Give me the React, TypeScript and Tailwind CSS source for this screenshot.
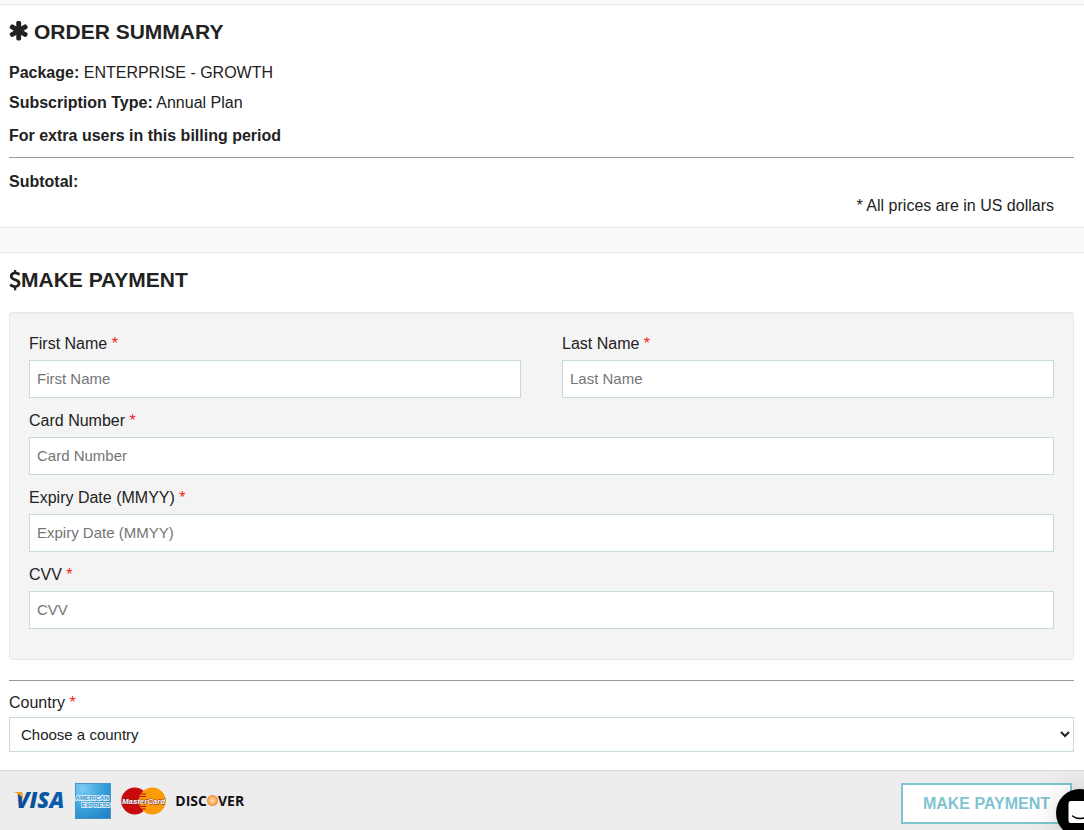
import type { ReactNode } from "react";

const CARD_FIELDS = [
  { id: "card-number", label: "Card Number" },
  { id: "expiry-date", label: "Expiry Date (MMYY)" },
  { id: "cvv", label: "CVV" }
] as const;

function AsteriskIcon() {
  return (
    <svg width="20" height="22" viewBox="66 130 1580 1738" fill="currentColor" aria-hidden="true">
      <path d="M1482 1050q46 26 59.5 77.5t-12.5 97.5l-64 110q-26 46-77.5 59.5t-97.5-12.5l-266-153v307q0 52-38 90t-90 38h-128q-52 0-90-38t-38-90v-307l-266 153q-46 26-97.5 12.5t-77.5-59.5l-64-110q-26-46-12.5-97.5t59.5-77.5l266-154-266-154q-46-26-59.5-77.5t12.5-97.5l64-110q26-46 77.5-59.5t97.5 12.5l266 153v-307q0-52 38-90t90-38h128q52 0 90 38t38 90v307l266-153q46-26 97.5-12.5t77.5 59.5l64 110q26 46 12.5 97.5t-59.5 77.5l-266 154z" />
    </svg>
  );
}

function DollarIcon() {
  return (
    <svg width="12" height="21" viewBox="384 64 1024 1792" fill="currentColor" aria-hidden="true">
      <path d="M1362 1185q0 153-99.5 263.5t-258.5 136.5v175q0 14-9 23t-23 9h-135q-13 0-22.5-9.5t-9.5-22.5v-175q-66-9-127.5-31t-101.5-44.5-74-48-46.5-37.5-17.5-18q-17-21-2-41l103-135q7-10 23-12 15-2 24 9l2 2q113 99 243 125 37 8 74 8 81 0 142.5-43t61.5-122q0-28-15-53t-33.5-42-58.5-37.5-66-32-80-32.5q-39-16-61.5-25t-61.5-26.5-62.5-31-56.5-35.5-53.5-42.5-43.5-49-35.5-58-21-66.5-8.5-78q0-138 98-242t255-134v-180q0-13 9.5-22.5t22.5-9.5h135q14 0 23 9t9 23v176q57 6 110.5 23t87 33.5 63.5 37.5 39 29 15 14q17 18 5 38l-81 146q-8 15-23 16-14 3-27-7-3-3-14.5-12t-39-26.5-58.5-32-74.500-26-85.500-11.500q-95 0-155 43t-60 111q0 26 8.500 48t29.500 41.500 39.500 33 56 31 60.500 27 70 27.500q53 20 81 31.500t76 35 75.500 42.500 62 50 53 63.500 31.500 76.500 13 94z" />
    </svg>
  );
}

function FieldLabel({ htmlFor, children }: { htmlFor: string; children: ReactNode }) {
  return (
    <label htmlFor={htmlFor} className="block leading-6">
      {children} <span className="text-[#f5221b]">*</span>
    </label>
  );
}

function TextField({ id, label }: { id: string; label: string }) {
  return (
    <div>
      <FieldLabel htmlFor={id}>{label}</FieldLabel>
      <input
        id={id}
        type="text"
        placeholder={label}
        className="mt-1 block h-[38px] w-full border border-[#c8dade] bg-white px-[7px] pb-0.5 text-[15px] placeholder:text-[#757575]"
      />
    </div>
  );
}

function VisaLogo() {
  return (
    <svg width="52" height="36" viewBox="0 0 52 36" role="img" aria-label="Visa">
      <defs>
        <linearGradient id="visa-blue" x1="0" y1="0" x2="1" y2="0">
          <stop offset="0" stopColor="#0b4a94" />
          <stop offset="1" stopColor="#0860ad" />
        </linearGradient>
      </defs>
      <text
        x="3"
        y="25"
        fill="url(#visa-blue)"
        fontFamily="'Open Sans', sans-serif"
        fontSize="22"
        fontStyle="italic"
        fontWeight="800"
      >
        VISA
      </text>
      <path d="M0.500 9h7c1.100 0 1.700.5 1.900 1.500l1.100 6C8.500 13 5.500 10.500 0.500 9z" fill="#f5a01d" />
    </svg>
  );
}

function AmexLogo() {
  return (
    <svg width="36" height="36" viewBox="0 0 36 36" role="img" aria-label="American Express">
      <defs>
        <radialGradient id="amex-blue" cx="0.2" cy="0.15" r="1">
          <stop offset="0" stopColor="#7dcbf3" />
          <stop offset="0.5" stopColor="#3fa6dd" />
          <stop offset="1" stopColor="#2485c6" />
        </radialGradient>
      </defs>
      <rect x="0.5" y="0.5" width="35" height="35" fill="url(#amex-blue)" stroke="#4795c8" />
      <g
        fill="#2b91cd"
        stroke="#e9f6fd"
        strokeWidth="1.6"
        paintOrder="stroke"
        fontFamily="'Liberation Sans', sans-serif"
        fontSize="6.2"
        fontWeight="700"
      >
        <text x="0.5" y="17">AMERICAN</text>
        <text x="6.5" y="24">EXPRESS</text>
      </g>
    </svg>
  );
}

function MasterCardLogo() {
  return (
    <svg width="45" height="36" viewBox="0 0 45 36" role="img" aria-label="MasterCard">
      <circle cx="13.7" cy="18" r="13.5" fill="#c80a0d" />
      <circle cx="31.3" cy="18" r="13.5" fill="#fb9b06" />
      <path
        d="M20 11h5M18.500 13.500h6.500M18.500 23.500h6.500M19.500 26h5"
        stroke="#c80a0d"
        strokeWidth="1.2"
      />
      <text
        x="22.500"
        y="21"
        textAnchor="middle"
        fill="#fff"
        stroke="#7a2430"
        strokeWidth="0.8"
        paintOrder="stroke"
        fontFamily="'Liberation Sans', sans-serif"
        fontSize="7.8"
        fontStyle="italic"
        fontWeight="700"
      >
        MasterCard
      </text>
    </svg>
  );
}

function DiscoverLogo() {
  return (
    <svg width="70" height="36" viewBox="0 0 70 36" role="img" aria-label="Discover">
      <defs>
        <radialGradient id="discover-orange">
          <stop offset="0" stopColor="#ffe3c4" />
          <stop offset="0.6" stopColor="#fbb066" />
          <stop offset="1" stopColor="#f28a2a" />
        </radialGradient>
      </defs>
      <g fill="#111" fontFamily="'Open Sans', sans-serif" fontSize="14" fontWeight="700">
        <text x="31" y="22.500" textAnchor="end">
          DISC
        </text>
        <text x="42" y="22.500">VER</text>
      </g>
      <circle cx="36.5" cy="17.5" r="5.5" fill="url(#discover-orange)" />
    </svg>
  );
}

function OrderSummary() {
  return (
    <section className="border-y border-[#e4eaea] bg-white pb-[9px] pl-[9px] pr-2.5 pt-[13px]">
      <h2 className="flex items-center gap-[5px] text-[21px] font-bold leading-7">
        <AsteriskIcon />
        ORDER SUMMARY
      </h2>
      <p className="mt-[15px]">
        <strong>Package:</strong> ENTERPRISE - GROWTH
      </p>
      <p className="mt-1.5">
        <strong>Subscription Type:</strong> Annual Plan
      </p>
      <p className="mt-[9px] font-bold">For extra users in this billing period</p>
      <hr className="mb-3 mt-[9px] border-[#999]" />
      <p className="font-bold">Subtotal:</p>
      <p className="pr-5 text-right">* All prices are in US dollars</p>
    </section>
  );
}

function PaymentForm() {
  return (
    <form onSubmit={(e) => e.preventDefault()}>
      <section className="border-t border-[#e4eaea] bg-white pb-[18px] pl-[9px] pr-2.5 pt-[13px]">
        <h2 className="flex items-center text-[21px] font-bold leading-7">
          <DollarIcon />
          MAKE PAYMENT
        </h2>

        <div className="mt-[18px] flex flex-col gap-[11px] rounded border border-t-2 border-[#e4eaea] bg-[#f4f4f4] px-[19px] pb-[30px] pt-[18px]">
          <div className="grid grid-cols-2 gap-x-[41px]">
            <TextField id="first-name" label="First Name" />
            <TextField id="last-name" label="Last Name" />
          </div>
          {CARD_FIELDS.map((f) => (
            <TextField key={f.id} id={f.id} label={f.label} />
          ))}
        </div>

        <hr className="mb-2.5 mt-5 border-[#999]" />

        <FieldLabel htmlFor="country">Country</FieldLabel>
        <select
          id="country"
          className="mt-0.5 block h-[35px] w-full border border-[#c8dade] bg-white pl-[7px] text-[15px]"
        >
          <option>Choose a country</option>
        </select>
      </section>

      <footer className="flex items-start justify-between border-t border-[#d9d9d9] bg-[#ededed] pb-1.5 pl-[13px] pr-3 pt-3">
        <div className="flex items-center gap-2.5">
          <VisaLogo />
          <AmexLogo />
          <MasterCardLogo />
          <DiscoverLogo />
        </div>
        <button
          type="submit"
          className="h-[41px] border-2 border-[#7fc4d0] bg-white px-5 font-bold text-[#7fc4d0]"
        >
          MAKE PAYMENT
        </button>
      </footer>
    </form>
  );
}

function ChatLauncher() {
  return (
    <button
      type="button"
      aria-label="Open chat"
      className="fixed -bottom-[7px] -right-5 flex size-12 items-center justify-center rounded-full bg-black shadow-[0_1px_6px_rgba(0,0,0,0.06),0_2px_32px_rgba(0,0,0,0.16)]"
    >
      <svg width="24" height="26" viewBox="0 0 24 26" aria-hidden="true">
        <path
          d="M3 1h18a2.500 2.500 0 0 1 2.500 2.500V26l-6-3H3A2.500 2.500 0 0 1 .5 20.500v-17A2.500 2.500 0 0 1 3 1z"
          fill="#fff"
        />
        <path
          d="M4.500 16c4.200 3.400 10.800 3.400 15 0"
          fill="none"
          stroke="#000"
          strokeWidth="1.400"
          strokeLinecap="round"
        />
      </svg>
    </button>
  );
}

export default function App() {
  return (
    <main className="min-h-screen overflow-x-hidden bg-[#fafafa] pt-1 font-['Liberation_Sans',Arial,sans-serif] text-base text-[#222]">
      <OrderSummary />
      <div className="h-6" />
      <PaymentForm />
      <ChatLauncher />
    </main>
  );
}
